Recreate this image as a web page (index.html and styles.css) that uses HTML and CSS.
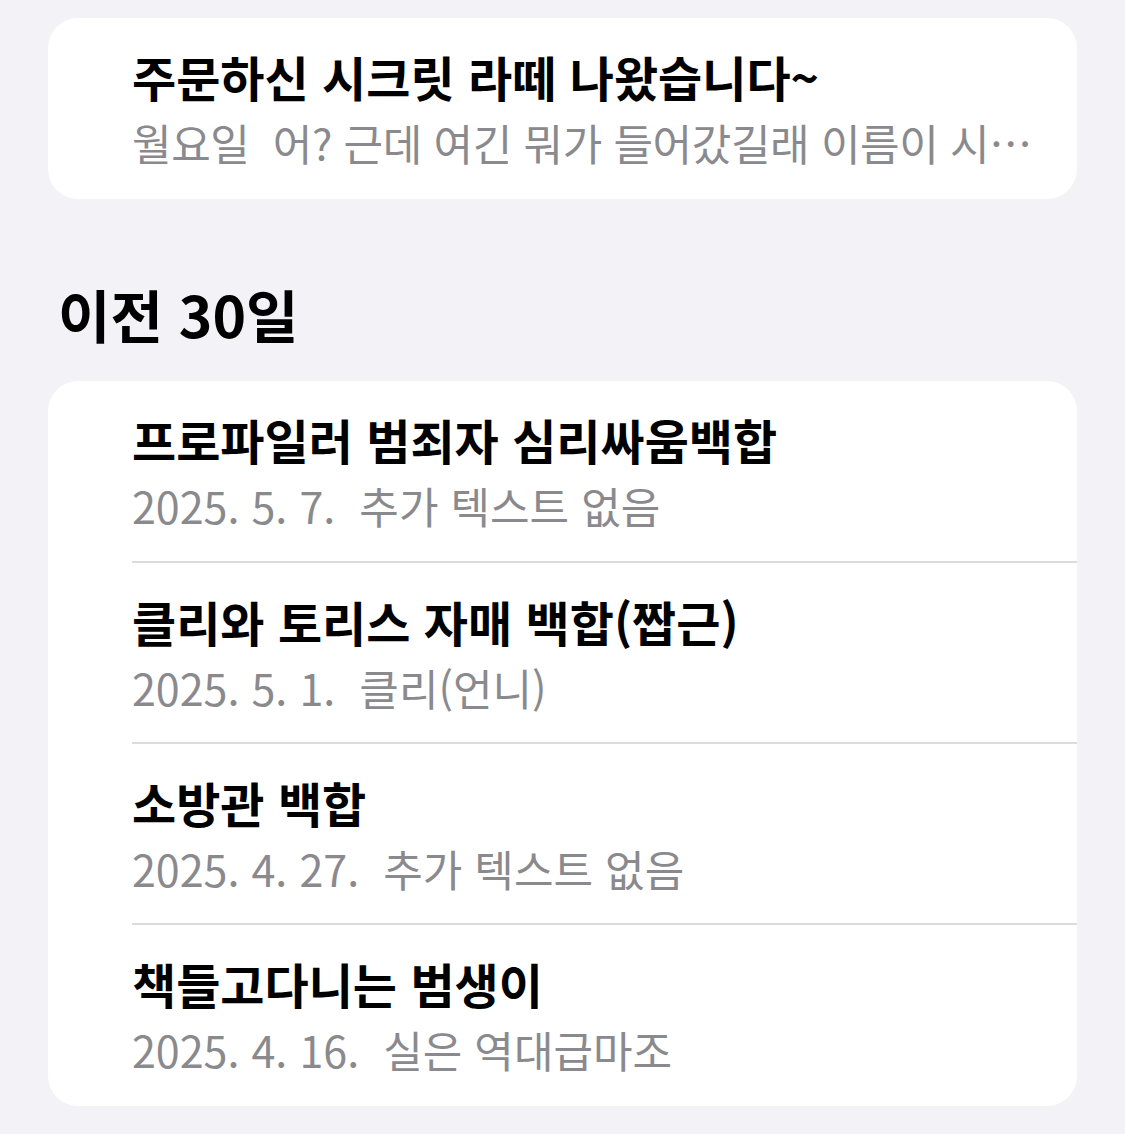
FILE: index.html
```html
<!DOCTYPE html>
<html lang="ko">
<head>
    <meta charset="utf-8">
    <title>메모</title>
    <link rel="stylesheet" href="styles.css">
</head>
<body>
    <div class="page">
        <div class="card">
            <div class="row">
                <div class="title">주문하신 시크릿 라떼 나왔습니다~</div>
                <div class="sub">월요일&nbsp; 어? 근데 여긴 뭐가 들어갔길래 이름이 시…</div>
            </div>
        </div>

        <h2 class="section">이전 30일</h2>

        <div class="card">
            <div class="row">
                <div class="title">프로파일러 범죄자 심리싸움백합</div>
                <div class="sub">2025. 5. 7.&nbsp; 추가 텍스트 없음</div>
            </div>
            <div class="row">
                <div class="title">클리와 토리스 자매 백합(짭근)</div>
                <div class="sub">2025. 5. 1.&nbsp; 클리(언니)</div>
            </div>
            <div class="row">
                <div class="title">소방관 백합</div>
                <div class="sub">2025. 4. 27.&nbsp; 추가 텍스트 없음</div>
            </div>
            <div class="row">
                <div class="title">책들고다니는 범생이</div>
                <div class="sub">2025. 4. 16.&nbsp; 실은 역대급마조</div>
            </div>
        </div>
    </div>
</body>
</html>
```

FILE: styles.css
```css
body {
    margin: 0;
    padding: 0;
    background-color: #f2f2f7;
    font-family: "Noto Sans CJK KR", "Noto Sans", sans-serif;
    color: #000;
}

.page {
    padding: 18px 48px 30px 48px;
}

.card {
    background-color: #fff;
    border-radius: 30px;
    overflow: hidden;
}

.row {
    margin-left: 84px;
    padding: 25px 0 22px 0;
    border-top: 2px solid #dcdce0;
}

.row:first-child {
    padding-bottom: 23px;
    border-top: none;
}

.row:last-child {
    padding-bottom: 24px;
}

.title {
    font-size: 48px;
    font-weight: 600;
    line-height: 66px;
    white-space: nowrap;
}

.sub {
    font-size: 43px;
    line-height: 66px;
    color: #8a8a8e;
    white-space: nowrap;
    overflow: hidden;
}

.card:first-child .sub {
    letter-spacing: -0.4px;
}

.section {
    margin: 0;
    padding: 84px 0 38px 10px;
    font-size: 57px;
    font-weight: 700;
    line-height: 60px;
}
```
